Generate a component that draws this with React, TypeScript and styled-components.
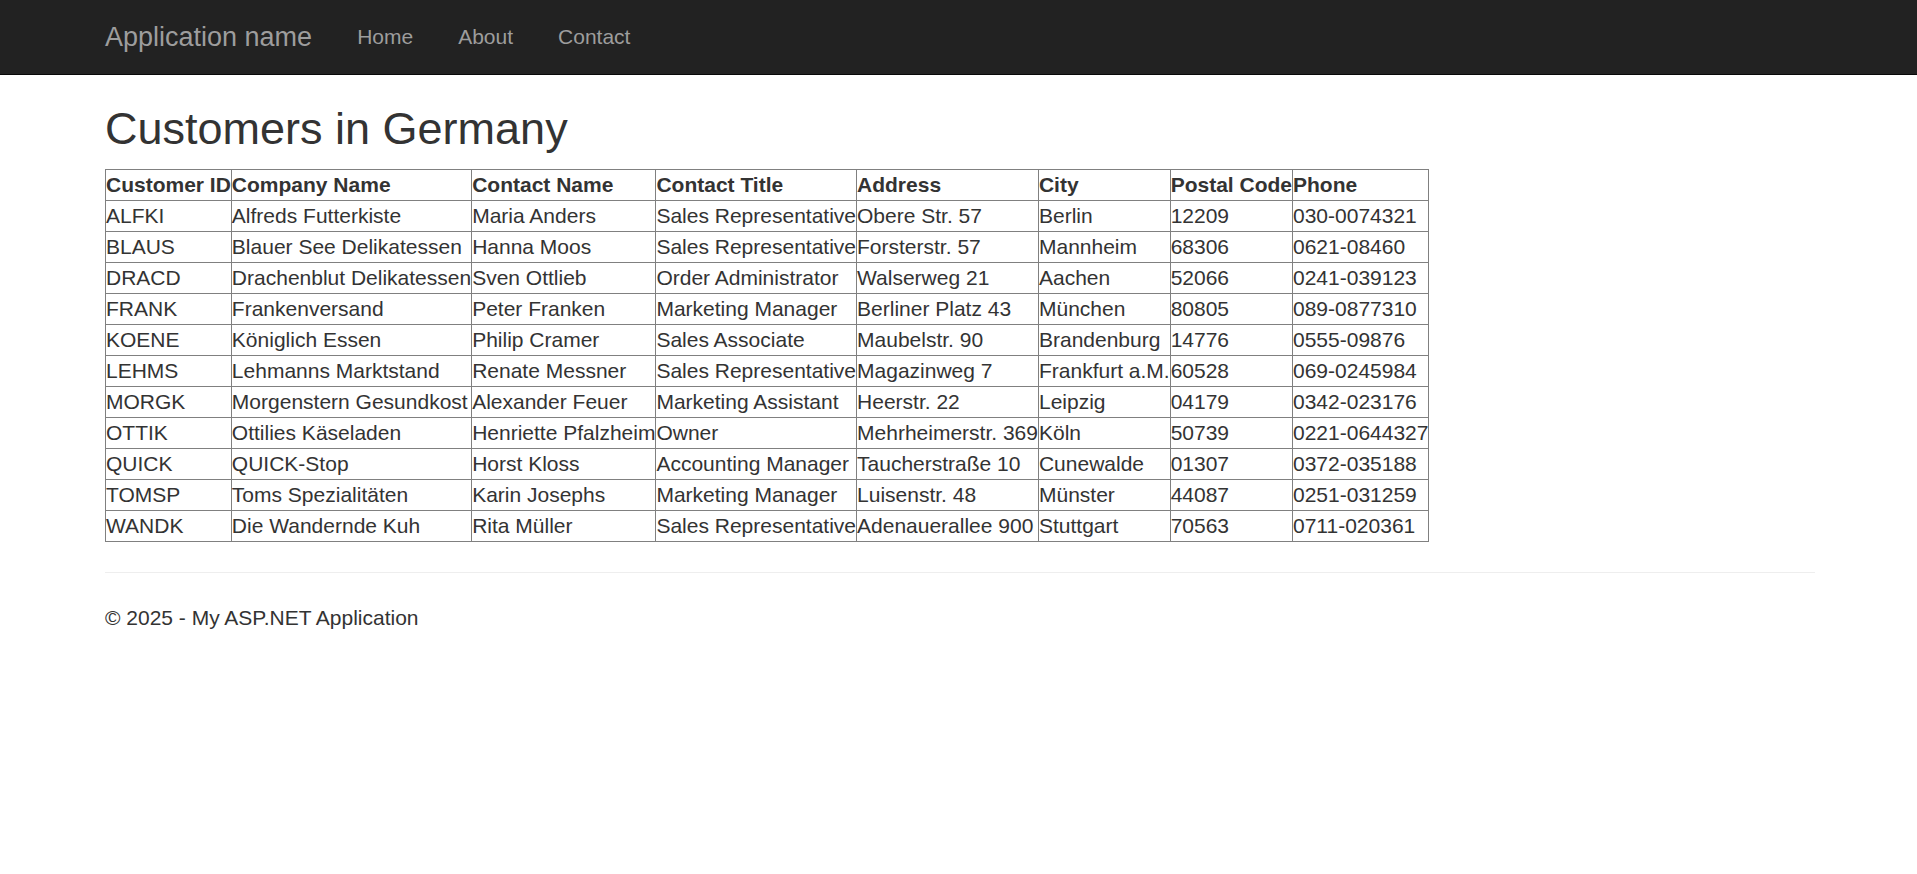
import React from "react";
import styled, { createGlobalStyle } from "styled-components";

const customers = [
	["ALFKI", "Alfreds Futterkiste", "Maria Anders", "Sales Representative", "Obere Str. 57", "Berlin", "12209", "030-0074321"],
	["BLAUS", "Blauer See Delikatessen", "Hanna Moos", "Sales Representative", "Forsterstr. 57", "Mannheim", "68306", "0621-08460"],
	["DRACD", "Drachenblut Delikatessen", "Sven Ottlieb", "Order Administrator", "Walserweg 21", "Aachen", "52066", "0241-039123"],
	["FRANK", "Frankenversand", "Peter Franken", "Marketing Manager", "Berliner Platz 43", "München", "80805", "089-0877310"],
	["KOENE", "Königlich Essen", "Philip Cramer", "Sales Associate", "Maubelstr. 90", "Brandenburg", "14776", "0555-09876"],
	["LEHMS", "Lehmanns Marktstand", "Renate Messner", "Sales Representative", "Magazinweg 7", "Frankfurt a.M.", "60528", "069-0245984"],
	["MORGK", "Morgenstern Gesundkost", "Alexander Feuer", "Marketing Assistant", "Heerstr. 22", "Leipzig", "04179", "0342-023176"],
	["OTTIK", "Ottilies Käseladen", "Henriette Pfalzheim", "Owner", "Mehrheimerstr. 369", "Köln", "50739", "0221-0644327"],
	["QUICK", "QUICK-Stop", "Horst Kloss", "Accounting Manager", "Taucherstraße 10", "Cunewalde", "01307", "0372-035188"],
	["TOMSP", "Toms Spezialitäten", "Karin Josephs", "Marketing Manager", "Luisenstr. 48", "Münster", "44087", "0251-031259"],
	["WANDK", "Die Wandernde Kuh", "Rita Müller", "Sales Representative", "Adenauerallee 900", "Stuttgart", "70563", "0711-020361"],
];

const columns = ["Customer ID", "Company Name", "Contact Name", "Contact Title", "Address", "City", "Postal Code", "Phone"];

export default function App() {
	return (
		<>
			<GlobalStyle />
			<Navbar>
				<NavContainer>
					<Brand href="#">Application name</Brand>
					<NavList>
						<li><NavLink href="#">Home</NavLink></li>
						<li><NavLink href="#">About</NavLink></li>
						<li><NavLink href="#">Contact</NavLink></li>
					</NavList>
				</NavContainer>
			</Navbar>
			<Container>
				<Title>Customers in Germany</Title>
				<Grid>
					<tbody>
						<tr>
							{columns.map((c) => (
								<HeadCell key={c} scope="col">{c}</HeadCell>
							))}
						</tr>
						{customers.map((row) => (
							<tr key={row[0]}>
								{row.map((v, i) => (
									<Cell key={i}>{v}</Cell>
								))}
							</tr>
						))}
					</tbody>
				</Grid>
				<Rule />
				<Footer>
					<p>© 2025 - My ASP.NET Application</p>
				</Footer>
			</Container>
		</>
	);
}

//#region Styled Components
const GlobalStyle = createGlobalStyle`
  * { box-sizing: border-box; }
  html, body { margin: 0; padding: 0; background: #fff; }
  body {
    font-family: "Liberation Sans", Arial, sans-serif;
    font-size: 21px;
    line-height: 30px;
    color: #333;
  }
`;

const Navbar = styled.nav`
  height: 75px;
  background: #222;
  border-bottom: 1px solid #080808;
`;

const NavContainer = styled.div`
  width: 1757px;
  margin: 0 auto;
  padding: 0 22px 0 25px;
  display: flex;
  align-items: stretch;
  height: 74px;
`;

const Brand = styled.a`
  margin-left: -22.5px;
  padding: 22px 22.5px;
  font-size: 27px;
  line-height: 30px;
  color: #9d9d9d;
  text-decoration: none;
`;

const NavList = styled.ul`
  display: flex;
  list-style: none;
  margin: 0;
  padding: 0;
`;

const NavLink = styled.a`
  display: block;
  padding: 22px 22.5px;
  font-size: 21px;
  line-height: 30px;
  color: #9d9d9d;
  text-decoration: none;
`;

const Container = styled.div`
  width: 1757px;
  margin: 0 auto;
  padding: 0 22px 0 25px;
`;

const Title = styled.h2`
  margin: 29px 0 15px;
  font-size: 45px;
  font-weight: 500;
  line-height: 1.1;
  color: #333;
`;

const Grid = styled.table`
  border-collapse: collapse;
  border: 1px solid #808080;
`;

const HeadCell = styled.th`
  padding: 0;
  text-align: left;
  font-weight: bold;
  white-space: nowrap;
  border: 1px solid #808080;
`;

const Cell = styled.td`
  padding: 0;
  white-space: nowrap;
  border: 1px solid #808080;
`;

const Rule = styled.hr`
  margin: 30px 0;
  border: 0;
  border-top: 1.5px solid #eee;
`;

const Footer = styled.footer`
  p {
    margin: 0 0 15px;
  }
`;
//#endregion
